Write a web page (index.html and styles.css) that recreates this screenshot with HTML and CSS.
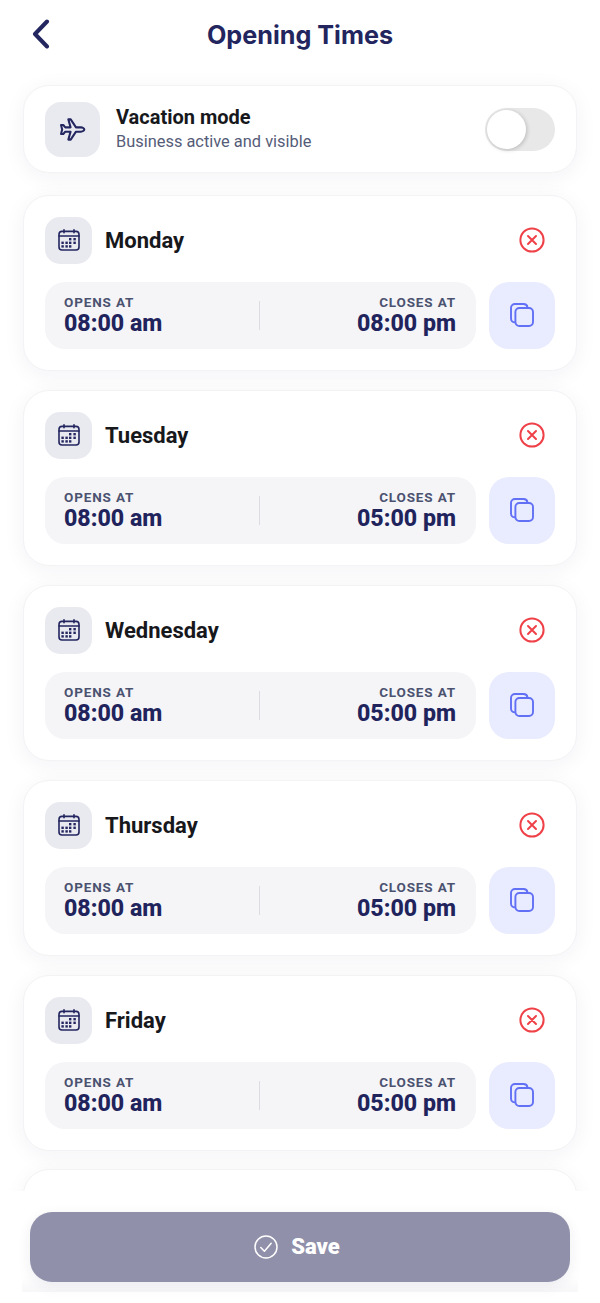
FILE: index.html
```html
<!DOCTYPE html>
<html lang="en">
<head>
<meta charset="utf-8">
<title>Opening Times</title>
<link rel="stylesheet" href="styles.css">
</head>
<body>
<svg class="defs" width="0" height="0" aria-hidden="true">
  <symbol id="i-cal" viewBox="0 0 22 22">
    <rect x="1" y="2.400" width="20" height="18.600" rx="3" fill="none" stroke="currentColor" stroke-width="1.600"/>
    <path d="M1 7h20M6 .8v3M16 .8v3" fill="none" stroke="currentColor" stroke-width="1.600" stroke-linecap="round"/>
    <g fill="currentColor">
      <rect x="11" y="9" width="2.400" height="2.400"/><rect x="15.400" y="9" width="2.400" height="2.400"/>
      <rect x="3.400" y="12.600" width="2.400" height="2.400"/><rect x="7.400" y="12.600" width="2.400" height="2.400"/><rect x="11" y="12.600" width="2.400" height="2.400"/><rect x="15.400" y="12.600" width="2.400" height="2.400"/>
      <rect x="3.400" y="16.200" width="2.400" height="2.400"/><rect x="7.400" y="16.200" width="2.400" height="2.400"/><rect x="11" y="16.200" width="2.400" height="2.400"/>
    </g>
  </symbol>
  <symbol id="i-close" viewBox="0 0 26 26">
    <circle cx="13" cy="13" r="11.600" fill="none" stroke="currentColor" stroke-width="2"/>
    <path d="M9 9l8 8M17 9l-8 8" fill="none" stroke="currentColor" stroke-width="2" stroke-linecap="round"/>
  </symbol>
  <symbol id="i-copy" viewBox="0 0 24 24">
    <path d="M5 19.400A4 4 0 0 1 1 15.400V5a4 4 0 0 1 4-4h8.500a4 4 0 0 1 4 3.400" fill="none" stroke="currentColor" stroke-width="1.900"/>
    <rect x="5.400" y="5" width="17.600" height="18" rx="4" fill="none" stroke="currentColor" stroke-width="1.900"/>
  </symbol>
</svg>

<header class="topbar">
  <button class="back" aria-label="Back">
    <svg width="18" height="30" viewBox="0 0 18 30"><path d="M15 2.500L3 15l12 12.500" fill="none" stroke="currentColor" stroke-width="4" stroke-linecap="round" stroke-linejoin="round"/></svg>
  </button>
  <h1 class="title">Opening Times</h1>
</header>

<main class="scroll">
  <section class="card vacation">
    <div class="tile tile-lg">
      <svg class="plane" width="27" height="27" viewBox="0 0 24 24"><path d="M22.500 12c0-1-1.500-1.900-3-1.900h-4.400L10.400 3H8.300l2 7.100H5.600L3.800 8H1.800l1 4-1 4h2l1.800-2.100h4.700l-2 7.100h2.100l4.700-7.100h4.400c1.500 0 3-.9 3-1.900z" fill="none" stroke="currentColor" stroke-width="1.800" stroke-linejoin="round"/></svg>
    </div>
    <div class="vac-text">
      <div class="vac-title">Vacation mode</div>
      <div class="vac-sub">Business active and visible</div>
    </div>
    <div class="toggle"><span class="knob"></span></div>
  </section>

  <section class="card day">
    <div class="day-head">
      <div class="tile"><svg class="cal"><use href="#i-cal"/></svg></div>
      <div class="day-name">Monday</div>
      <svg class="close"><use href="#i-close"/></svg>
    </div>
    <div class="day-body">
      <div class="times">
        <div class="time"><div class="label">OPENS AT</div><div class="value">08:00 am</div></div>
        <div class="divider"></div>
        <div class="time right"><div class="label">CLOSES AT</div><div class="value">08:00 pm</div></div>
      </div>
      <button class="copy" aria-label="Copy"><svg class="copy-i"><use href="#i-copy"/></svg></button>
    </div>
  </section>

  <section class="card day">
    <div class="day-head">
      <div class="tile"><svg class="cal"><use href="#i-cal"/></svg></div>
      <div class="day-name">Tuesday</div>
      <svg class="close"><use href="#i-close"/></svg>
    </div>
    <div class="day-body">
      <div class="times">
        <div class="time"><div class="label">OPENS AT</div><div class="value">08:00 am</div></div>
        <div class="divider"></div>
        <div class="time right"><div class="label">CLOSES AT</div><div class="value">05:00 pm</div></div>
      </div>
      <button class="copy" aria-label="Copy"><svg class="copy-i"><use href="#i-copy"/></svg></button>
    </div>
  </section>

  <section class="card day">
    <div class="day-head">
      <div class="tile"><svg class="cal"><use href="#i-cal"/></svg></div>
      <div class="day-name">Wednesday</div>
      <svg class="close"><use href="#i-close"/></svg>
    </div>
    <div class="day-body">
      <div class="times">
        <div class="time"><div class="label">OPENS AT</div><div class="value">08:00 am</div></div>
        <div class="divider"></div>
        <div class="time right"><div class="label">CLOSES AT</div><div class="value">05:00 pm</div></div>
      </div>
      <button class="copy" aria-label="Copy"><svg class="copy-i"><use href="#i-copy"/></svg></button>
    </div>
  </section>

  <section class="card day">
    <div class="day-head">
      <div class="tile"><svg class="cal"><use href="#i-cal"/></svg></div>
      <div class="day-name">Thursday</div>
      <svg class="close"><use href="#i-close"/></svg>
    </div>
    <div class="day-body">
      <div class="times">
        <div class="time"><div class="label">OPENS AT</div><div class="value">08:00 am</div></div>
        <div class="divider"></div>
        <div class="time right"><div class="label">CLOSES AT</div><div class="value">05:00 pm</div></div>
      </div>
      <button class="copy" aria-label="Copy"><svg class="copy-i"><use href="#i-copy"/></svg></button>
    </div>
  </section>

  <section class="card day">
    <div class="day-head">
      <div class="tile"><svg class="cal"><use href="#i-cal"/></svg></div>
      <div class="day-name">Friday</div>
      <svg class="close"><use href="#i-close"/></svg>
    </div>
    <div class="day-body">
      <div class="times">
        <div class="time"><div class="label">OPENS AT</div><div class="value">08:00 am</div></div>
        <div class="divider"></div>
        <div class="time right"><div class="label">CLOSES AT</div><div class="value">05:00 pm</div></div>
      </div>
      <button class="copy" aria-label="Copy"><svg class="copy-i"><use href="#i-copy"/></svg></button>
    </div>
  </section>

  <section class="card day"></section>
</main>

<footer class="footer">
  <button class="save">
    <svg width="24" height="24" viewBox="0 0 24 24"><circle cx="12" cy="12" r="11" fill="none" stroke="currentColor" stroke-width="1.500"/><path d="M6.800 12.500l3.600 3.700 6.800-8" fill="none" stroke="currentColor" stroke-width="1.500" stroke-linecap="round" stroke-linejoin="round"/></svg>
    <span class="save-text">Save</span>
  </button>
</footer>
</body>
</html>
```
FILE: styles.css
```css
* { box-sizing: border-box; }
html, body { margin: 0; padding: 0; }
body {
  width: 600px;
  height: 1303px;
  background: #fff;
  font-family: Roboto, "Liberation Sans", sans-serif;
  overflow: hidden;
}
.defs { display: block; width: 0; height: 0; }
button { border: 0; padding: 0; background: none; font: inherit; }

.topbar {
  height: 70px;
  position: relative;
  display: flex;
  align-items: center;
  justify-content: center;
}
.back {
  position: absolute;
  left: 32px;
  top: 19px;
  color: #23265f;
  display: flex;
}
.title {
  margin: 0 0 1px;
  font-family: Inter, Roboto, sans-serif;
  font-size: 25.200px;
  font-weight: 700;
  color: #23255e;
}

.scroll {
  height: 1121px;
  padding: 15px 23px 0;
  overflow: hidden;
  display: flex;
  flex-direction: column;
  gap: 18.900px;
}
.card {
  flex: none;
  background: #fff;
  border: 1px solid #f3f3f6;
  border-radius: 26px;
  box-shadow: 0 4px 22px rgba(35, 38, 95, 0.055);
}
.vacation {
  height: 88px;
  margin-bottom: 3.100px;
  padding: 0 21px;
  display: flex;
  align-items: center;
}
.tile {
  width: 47px;
  height: 47px;
  border-radius: 15px;
  background: #e9e9f0;
  color: #23265f;
  display: flex;
  align-items: center;
  justify-content: center;
  flex: none;
}
.tile-lg { width: 55px; height: 55px; border-radius: 16px; }
.vac-text { margin-left: 16px; flex: 1; }
.vac-title { font-size: 20px; font-weight: 700; color: #17181c; line-height: 23px; }
.vac-sub { font-size: 16.400px; color: #555c78; line-height: 21px; margin-top: 2px; }
.toggle {
  width: 70px;
  height: 43px;
  margin-top: 1px;
  border-radius: 22px;
  background: #e8e8e8;
  position: relative;
}
.knob {
  position: absolute;
  left: 2px;
  top: 2px;
  width: 39px;
  height: 39px;
  border-radius: 50%;
  background: #fff;
  box-shadow: 1px 1px 4px rgba(0, 0, 0, 0.2);
}

.day { height: 176px; padding: 21px 21px 0; }
.day-head { display: flex; align-items: center; height: 47px; }
.cal { width: 22px; height: 22px; }
.day-name {
  margin-left: 13px;
  flex: 1;
  font-size: 22px;
  font-weight: 700;
  color: #17181c;
}
.close { width: 26px; height: 26px; color: #ef4148; margin-right: 10px; }
.day-body { display: flex; gap: 13px; margin-top: 18px; }
.times {
  flex: 1;
  height: 67px;
  border-radius: 20px;
  background: #f5f5f8;
  padding: 0 20px 0 19px;
  display: flex;
  align-items: center;
  justify-content: space-between;
  position: relative;
}
.time { display: flex; flex-direction: column; padding-top: 1px; }
.right { align-items: flex-end; }
.label {
  font-size: 13.500px;
  font-weight: 700;
  letter-spacing: 0.85px;
  line-height: 16px;
  color: #4b5270;
}
.value {
  font-size: 23.200px;
  font-weight: 800;
  line-height: 27px;
  color: #21245c;
}
.divider {
  position: absolute;
  left: 214px;
  top: 19px;
  width: 1px;
  height: 29px;
  background: #dcdce2;
}
.copy {
  width: 66px;
  height: 67px;
  border-radius: 20px;
  background: #e9ebfe;
  color: #6170f5;
  display: flex;
  align-items: center;
  justify-content: center;
  flex: none;
}
.copy-i { width: 24px; height: 24px; }

.footer {
  height: 101px;
  margin: 0 22px;
  padding: 21px 8px 0;
  background: #fff;
  box-shadow: inset 0 -20px 16px -16px rgba(35, 38, 95, 0.05);
}
.save {
  width: 100%;
  height: 70px;
  padding-right: 6px;
  border-radius: 22px;
  background: #9090aa;
  color: #fff;
  display: flex;
  align-items: center;
  justify-content: center;
  gap: 13px;
  box-shadow: 0 4px 14px rgba(35, 38, 95, 0.08);
  font-size: 22px;
  font-weight: 900;
}
.save-text { margin-top: -1px; }
```
